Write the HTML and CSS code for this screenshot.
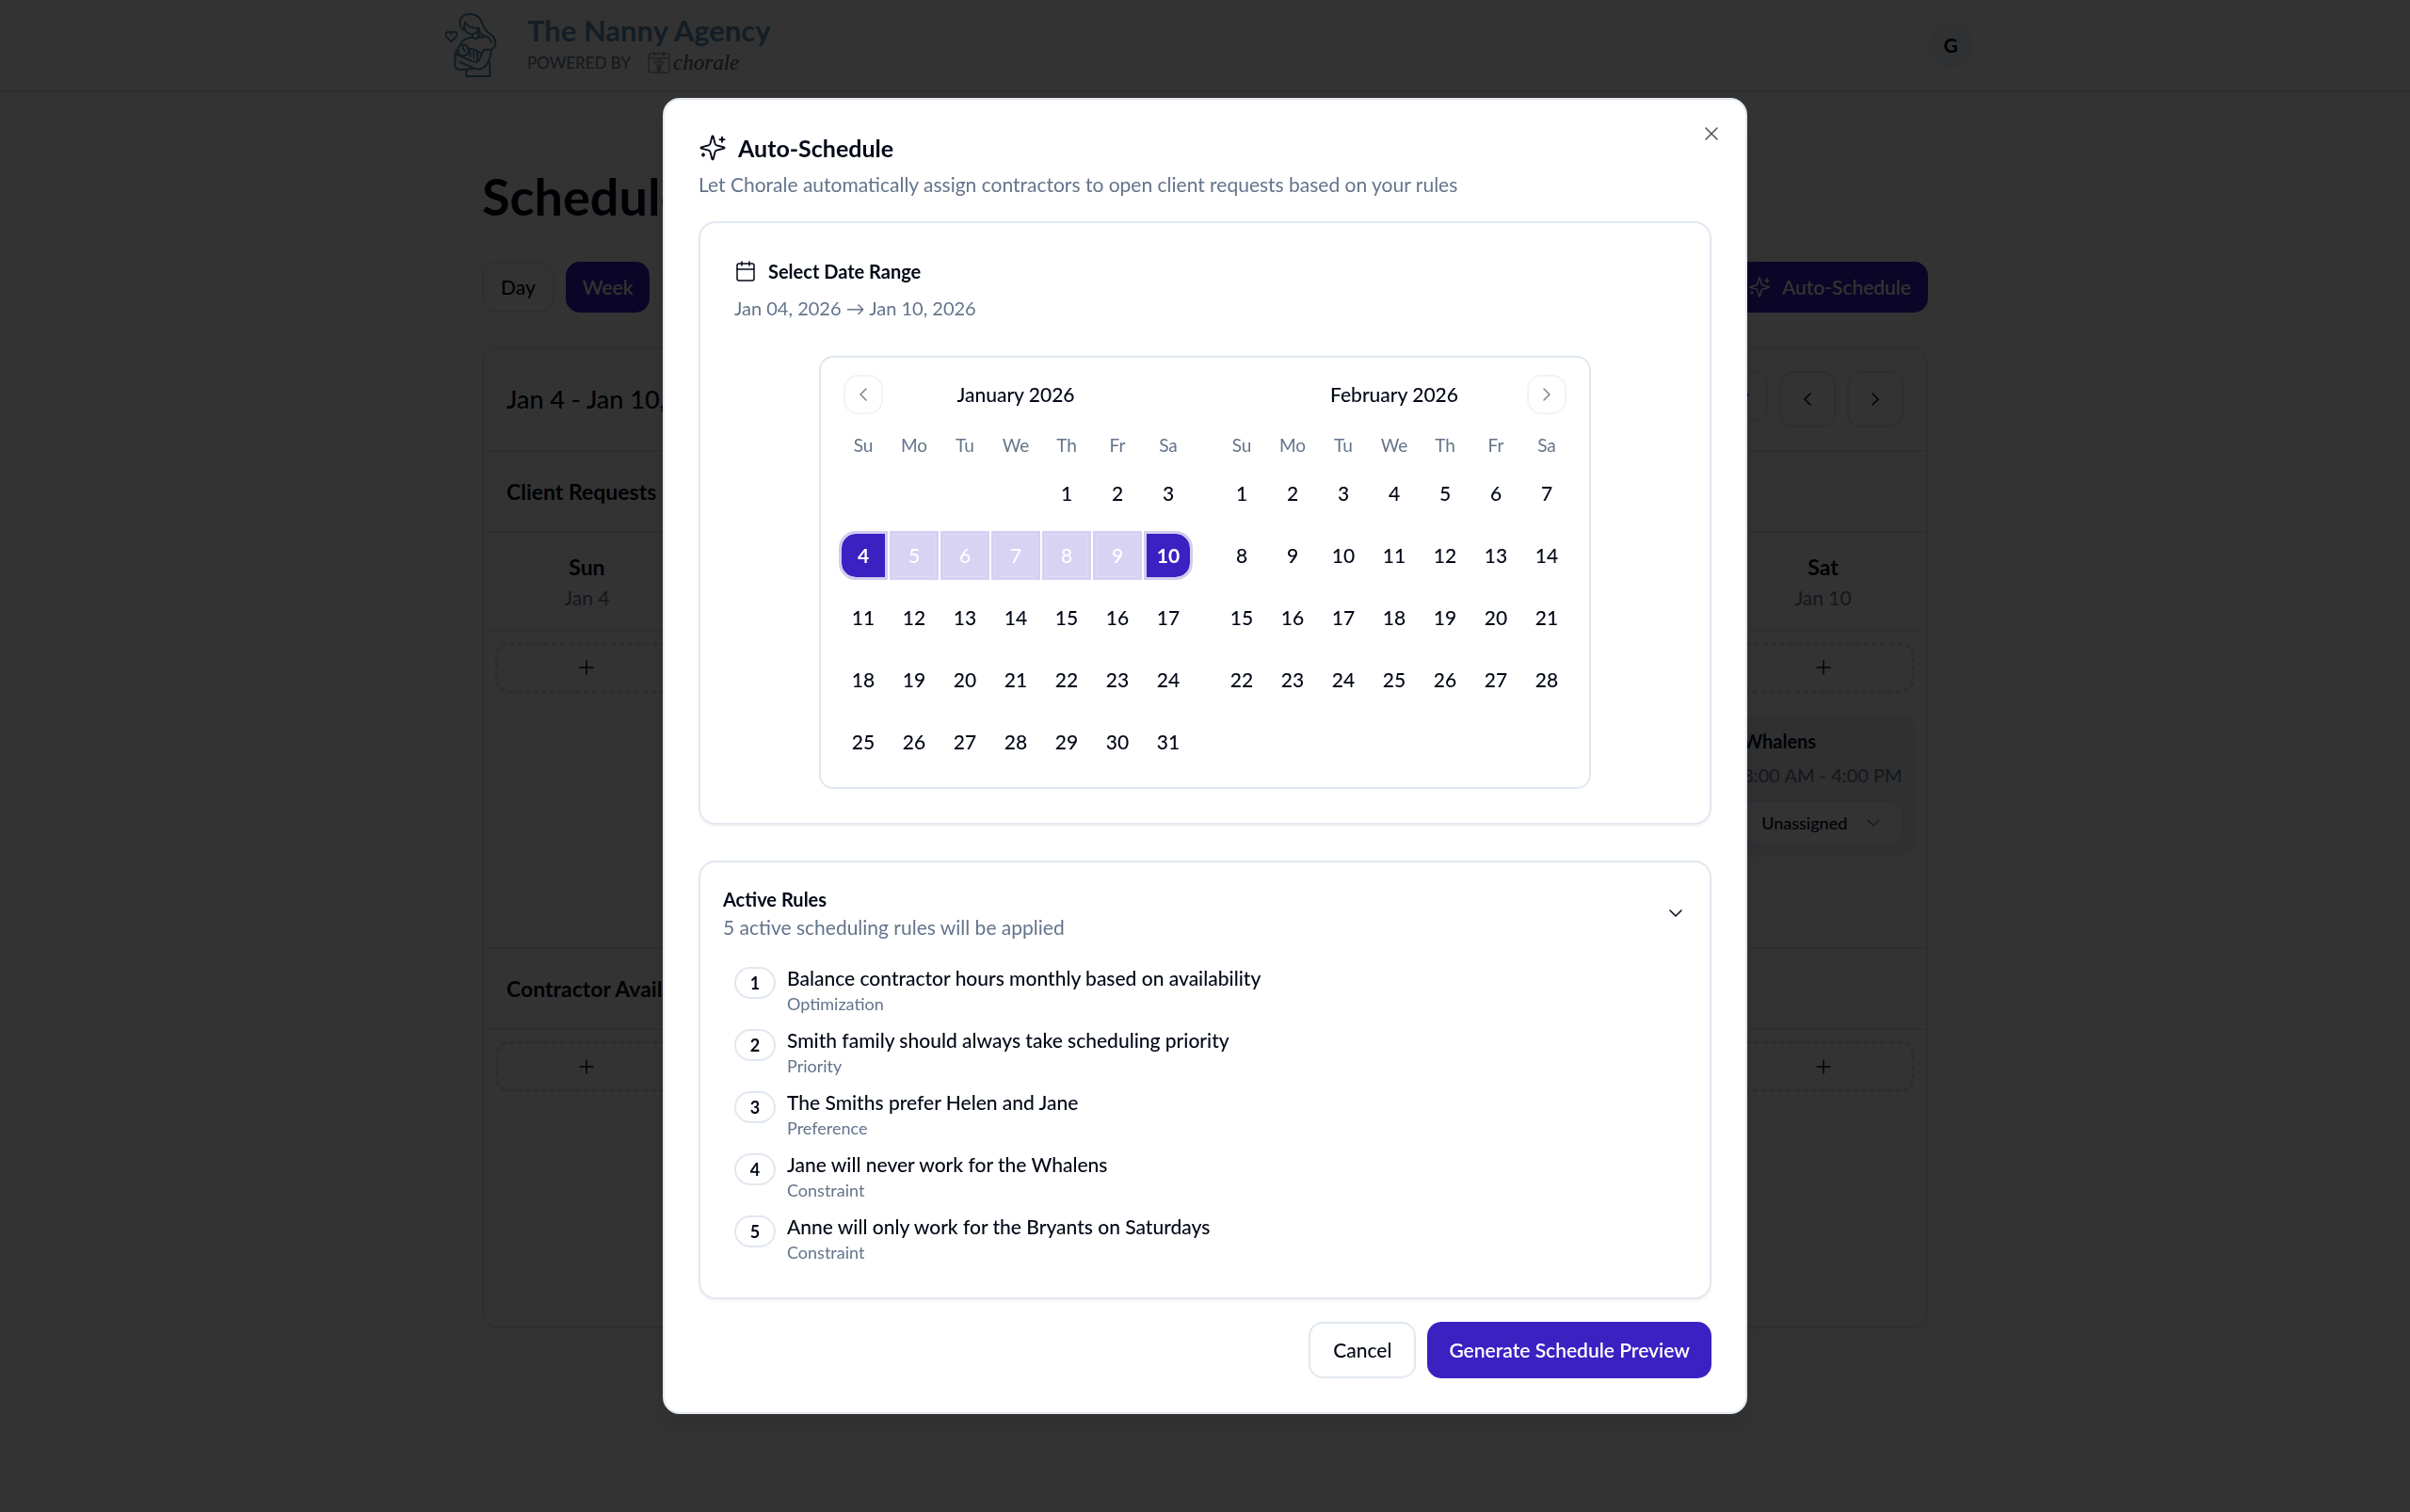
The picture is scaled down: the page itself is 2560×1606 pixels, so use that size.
FILE: index.html
```html
<!DOCTYPE html>
<html lang="en">
<head>
    <meta charset="UTF-8">
    <title>Schedule - The Nanny Agency</title>
    <link rel="stylesheet" href="styles.css">
</head>
<body>
    <!-- Icon set -->
    <svg class="sprite" aria-hidden="true">
        <symbol id="sparkles" viewBox="0 0 24 24">
            <path d="M9.937 15.5A2 2 0 0 0 8.5 14.063l-6.135-1.582a.5.5 0 0 1 0-.962L8.5 9.936A2 2 0 0 0 9.937 8.5l1.582-6.135a.5.5 0 0 1 .963 0L14.063 8.5A2 2 0 0 0 15.5 9.937l6.135 1.581a.5.5 0 0 1 0 .964L15.5 14.063a2 2 0 0 0-1.437 1.437l-1.582 6.135a.5.5 0 0 1-.963 0z"/>
            <path d="M20 3v4M22 5h-4M4 17v2M5 18H3"/>
        </symbol>
        <symbol id="calendar" viewBox="0 0 24 24">
            <path d="M8 2v4M16 2v4M3 10h18"/>
            <rect x="3" y="4" width="18" height="18" rx="2"/>
        </symbol>
        <symbol id="left" viewBox="0 0 24 24"><path d="m15 18-6-6 6-6"/></symbol>
        <symbol id="right" viewBox="0 0 24 24"><path d="m9 18 6-6-6-6"/></symbol>
        <symbol id="down" viewBox="0 0 24 24"><path d="m6 9 6 6 6-6"/></symbol>
        <symbol id="plus" viewBox="0 0 24 24"><path d="M5 12h14M12 5v14"/></symbol>
        <symbol id="close" viewBox="0 0 24 24"><path d="M18 6 6 18M6 6l12 12"/></symbol>
    </svg>

    <header class="topbar">
        <div class="topbar-inner">
            <svg class="logo" viewBox="90 36 180 216" aria-hidden="true">
                <path d="M118 132 103 118C97 110 102 101 110 101c5 0 8 4 8 8 0-4 4-8 9-8 9 0 13 9 7 17z"/>
                <path d="M160 97c-13-8-17-22-13-34 5-13 19-19 34-18 19 1 30 12 36 29 5 17 14 26 26 35 14 10 19 24 14 38-2 5-7 8-12 12"/>
                <path d="M163 71c-5 10-4 22 2 29 7 9 21 11 31 5 6-3 9-9 10-16-20 2-35-4-43-18z"/>
                <path d="M206 90c0 14 8 22 22 26 10 3 17 8 18 22"/>
                <path d="M186 109v6c-3 4-8 6-14 7-14 2-22 10-25 22M204 103v10c4 5 10 7 18 8M183 116c6 9 20 9 25 0"/>
                <path d="M143 147c8-6 18-6 25 0 8 8 8 20 0 26-6 5-14 6-21 4-9-6-11-20-4-30zM156 146c-2 10 2 16 8 17"/>
                <path d="M168 157c16-3 30 1 44 13M178 160v22M190 161v26M201 166v25"/>
                <path d="M135 158c-6 12-6 22-4 34l-2 12c0 12 8 18 20 18l46-3M133 172l48 22c10 4 20 4 26-2l14-34h24"/>
                <path d="M245 158c-1 20-5 38-17 52-10 10-24 12-36 8l-50-22M166 220v23h76l-2-46"/>
            </svg>
            <div class="brand">
                <span class="brand-name">The Nanny Agency</span>
                <span class="powered">
                    POWERED BY
                    <svg class="chorale-icon" viewBox="0 0 24 24" aria-hidden="true">
                        <rect x="1" y="3" width="22" height="20" rx="2"/>
                        <path d="M1 8h22M7 1v5M17 1v5"/>
                        <path d="M12 22v-8M12 18l-4-5M12 18l4-5M11 22l-1-5M13 22l1-5M6 13l2-2 2 2M14 13l2-2 2 2M10 11l2-2 2 2-2 2z"/>
                    </svg>
                    <em class="chorale">chorale</em>
                </span>
            </div>
            <button class="avatar">G</button>
        </div>
    </header>

    <main class="page">
        <h1>Schedule</h1>
        <div class="toolbar">
            <button class="btn">Day</button>
            <button class="btn primary">Week</button>
            <button class="btn">Month</button>
            <button class="btn primary auto"><svg class="icon"><use href="#sparkles"/></svg>Auto-Schedule</button>
        </div>

        <section class="board">
            <div class="board-head">
                <h2>Jan 4 - Jan 10, 2026</h2>
                <button class="btn">Today</button>
                <button class="btn square" aria-label="Previous week"><svg class="icon"><use href="#left"/></svg></button>
                <button class="btn square" aria-label="Next week"><svg class="icon"><use href="#right"/></svg></button>
            </div>
            <h3 class="section-title">Client Requests</h3>
            <div class="week day-names">
                <div><b>Sun</b><span>Jan 4</span></div>
                <div></div>
                <div></div>
                <div></div>
                <div></div>
                <div></div>
                <div><b>Sat</b><span>Jan 10</span></div>
            </div>
            <div class="week slots requests">
                <div><button class="add" aria-label="Add request"><svg class="icon"><use href="#plus"/></svg></button></div>
                <div></div>
                <div></div>
                <div></div>
                <div></div>
                <div></div>
                <div>
                    <button class="add" aria-label="Add request"><svg class="icon"><use href="#plus"/></svg></button>
                    <article class="request">
                        <b>Whalens</b>
                        <span>8:00 AM - 4:00 PM</span>
                        <div class="assign">
                            <select aria-label="Contractor"><option>Unassigned</option></select>
                            <svg class="icon"><use href="#down"/></svg>
                        </div>
                    </article>
                </div>
            </div>
            <h3 class="section-title">Contractor Availability</h3>
            <div class="week slots">
                <div><button class="add" aria-label="Add availability"><svg class="icon"><use href="#plus"/></svg></button></div>
                <div></div>
                <div></div>
                <div></div>
                <div></div>
                <div></div>
                <div><button class="add" aria-label="Add availability"><svg class="icon"><use href="#plus"/></svg></button></div>
            </div>
        </section>
    </main>

    <div class="modal-overlay">
        <div class="modal" role="dialog" aria-labelledby="modalTitle">
            <button class="close" aria-label="Close"><svg class="icon"><use href="#close"/></svg></button>
            <h2 class="modal-title" id="modalTitle"><svg class="icon large"><use href="#sparkles"/></svg>Auto-Schedule</h2>
            <p class="muted">Let Chorale automatically assign contractors to open client requests based on your rules</p>

            <section class="card">
                <h3 class="card-title"><svg class="icon"><use href="#calendar"/></svg>Select Date Range</h3>
                <p class="muted range">Jan 04, 2026 → Jan 10, 2026</p>
                <div class="picker">
                    <div class="month">
                        <div class="caption">
                            <button class="nav" aria-label="Previous month"><svg class="icon"><use href="#left"/></svg></button>
                            <span>January 2026</span>
                        </div>
                        <table id="january"></table>
                    </div>
                    <div class="month">
                        <div class="caption">
                            <span>February 2026</span>
                            <button class="nav" aria-label="Next month"><svg class="icon"><use href="#right"/></svg></button>
                        </div>
                        <table id="february"></table>
                    </div>
                </div>
            </section>

            <section class="card rules">
                <div class="rules-head">
                    <div>
                        <h3>Active Rules</h3>
                        <p class="muted">5 active scheduling rules will be applied</p>
                    </div>
                    <button class="toggle" aria-label="Collapse rules"><svg class="icon"><use href="#down"/></svg></button>
                </div>
                <ol class="rule-list">
                    <li><span class="badge">1</span><div><p>Balance contractor hours monthly based on availability</p><small>Optimization</small></div></li>
                    <li><span class="badge">2</span><div><p>Smith family should always take scheduling priority</p><small>Priority</small></div></li>
                    <li><span class="badge">3</span><div><p>The Smiths prefer Helen and Jane</p><small>Preference</small></div></li>
                    <li><span class="badge">4</span><div><p>Jane will never work for the Whalens</p><small>Constraint</small></div></li>
                    <li><span class="badge">5</span><div><p>Anne will only work for the Bryants on Saturdays</p><small>Constraint</small></div></li>
                </ol>
            </section>

            <div class="modal-buttons">
                <button class="btn big">Cancel</button>
                <button class="btn big primary">Generate Schedule Preview</button>
            </div>
        </div>
    </div>

    <script>
        const dayNames = ['Su', 'Mo', 'Tu', 'We', 'Th', 'Fr', 'Sa'];

        // Fill a table with the days of one month
        function renderMonth(id, year, month, from, to) {
            const table = document.getElementById(id);
            const first = new Date(year, month, 1).getDay();
            const count = new Date(year, month + 1, 0).getDate();
            let html = '<thead><tr>' + dayNames.map(d => `<th scope="col">${d}</th>`).join('') + '</tr></thead><tbody>';

            for (let start = 1 - first; start <= count; start += 7) {
                html += '<tr>';
                for (let day = start; day < start + 7; day++) {
                    let state = '';
                    if (day === from) state = 'start';
                    else if (day === to) state = 'end';
                    else if (day > from && day < to) state = 'middle';
                    html += day < 1 || day > count ? '<td></td>' : `<td><button class="day ${state}">${day}</button></td>`;
                }
                html += '</tr>';
            }
            table.innerHTML = html + '</tbody>';
        }

        renderMonth('january', 2026, 0, 4, 10);
        renderMonth('february', 2026, 1);
    </script>
</body>
</html>
```

FILE: styles.css
```css
* {
    box-sizing: border-box;
}

body {
    margin: 0;
    font-family: Lato, "Noto Sans", sans-serif;
    font-size: 21px;
    line-height: 30px;
    color: #020817;
    background-color: #fff;
}

h1, h2, h3, p, ol {
    margin: 0;
    padding: 0;
}

button, select {
    font: inherit;
    color: inherit;
    background: none;
    border: none;
    padding: 0;
    cursor: pointer;
}

.sprite {
    display: none;
}

.icon {
    width: 24px;
    height: 24px;
    flex: none;
    fill: none;
    stroke: currentColor;
    stroke-width: 1.5;
    stroke-linecap: round;
    stroke-linejoin: round;
}

.icon.large {
    width: 30px;
    height: 30px;
}

.muted {
    color: #64748b;
}

/* Top bar */

.topbar {
    border-bottom: 2px solid #e2e8f0;
}

.topbar-inner {
    display: flex;
    align-items: center;
    max-width: 1632px;
    height: 96px;
    margin: 0 auto;
}

.logo {
    width: 60px;
    height: 72px;
    margin: 0 30px 0 6px;
    fill: none;
    stroke: #5288ab;
    stroke-width: 6;
    stroke-linejoin: round;
}

.brand {
    display: flex;
    flex-direction: column;
    flex: 1;
}

.brand-name {
    font-size: 31px;
    font-weight: 700;
    line-height: 36px;
    color: #5f93b8;
}

.powered {
    display: flex;
    align-items: center;
    font-size: 17px;
    line-height: 33px;
    color: #64748b;
}

.chorale-icon {
    width: 24px;
    height: 24px;
    margin: 0 3px 0 18px;
    fill: none;
    stroke: #64748b;
    stroke-width: 1;
}

.chorale {
    font-family: "Liberation Serif", serif;
    font-size: 23px;
    color: #555;
}

.avatar {
    width: 48px;
    height: 48px;
    border-radius: 50%;
    font-weight: 700;
    background-color: #f1f5f9;
}

/* Schedule page */

.page {
    max-width: 1536px;
    margin: 0 auto;
    padding: 78px 0 48px;
}

h1 {
    font-size: 54px;
    line-height: 66px;
}

.toolbar {
    display: flex;
    gap: 12px;
    margin: 36px 0;
}

.btn {
    display: flex;
    align-items: center;
    justify-content: center;
    height: 54px;
    padding: 0 18px;
    border: 2px solid #e2e8f0;
    border-radius: 15px;
    font-weight: 500;
    background-color: #fff;
}

.btn.primary {
    padding: 0 16px;
    color: #fff;
    background-color: #3b21c2;
    border-color: #3b21c2;
}

.btn.auto {
    gap: 12px;
    margin-left: auto;
}

.btn.square {
    width: 60px;
    height: 60px;
    padding: 0;
}

.btn.big {
    height: 60px;
    padding: 0 24px;
}

.btn.big.primary {
    padding: 0 21px;
    font-weight: 600;
}

.board {
    border: 2px solid #e2e8f0;
    border-radius: 18px;
}

.board-head {
    display: flex;
    gap: 12px;
    padding: 24px;
}

.board-head h2 {
    flex: 1;
    align-self: center;
    font-size: 27px;
    font-weight: 500;
}

.section-title {
    padding: 24px;
    border-top: 2px solid #e2e8f0;
    border-bottom: 2px solid #e2e8f0;
    font-size: 23px;
    line-height: 36px;
}

.week {
    display: grid;
    grid-template-columns: repeat(7, minmax(0, 1fr));
}

.day-names {
    padding: 18px 0;
    border-bottom: 2px solid #e2e8f0;
    text-align: center;
}

.day-names b {
    display: block;
    font-size: 23px;
    line-height: 36px;
}

.day-names span {
    color: #64748b;
}

.slots > div {
    min-height: 315px;
    padding: 12px;
}

.requests > div {
    min-height: 336px;
}

.add {
    display: flex;
    align-items: center;
    justify-content: center;
    width: 100%;
    height: 54px;
    border: 3px dashed #d8dee7;
    border-radius: 15px;
}

.request {
    display: flex;
    flex-direction: column;
    margin-top: 24px;
    padding: 12px;
    border-radius: 15px;
    font-size: 20px;
    background-color: #eef0f2;
}

.request > b {
    margin-bottom: 6px;
}

.request > span {
    margin-bottom: 12px;
    color: #64748b;
    white-space: nowrap;
}

.assign {
    display: flex;
    align-items: center;
    height: 48px;
    padding: 0 18px;
    border: 2px solid #e2e8f0;
    border-radius: 15px;
    font-size: 18px;
    font-weight: 500;
    background-color: #fff;
}

.assign select {
    flex: 1;
    min-width: 0;
    appearance: none;
}

.assign .icon {
    opacity: 0.5;
}

/* Auto-schedule modal */

.modal-overlay {
    position: fixed;
    inset: 0;
    display: flex;
    justify-content: center;
    align-items: center;
    background-color: rgba(0, 0, 0, 0.8);
}

.modal {
    position: relative;
    width: 100%;
    max-width: 1152px;
    padding: 36px;
    border: 2px solid #e2e8f0;
    border-radius: 18px;
    background-color: #fff;
    box-shadow: 0 15px 24px rgba(0, 0, 0, 0.1);
}

.close {
    position: absolute;
    top: 24px;
    right: 24px;
    height: 24px;
    opacity: 0.7;
}

.close .icon {
    display: block;
}

.modal-title, .card-title {
    display: flex;
    align-items: center;
    gap: 12px;
    margin-bottom: 9px;
}

.modal-title {
    font-size: 25px;
}

.card {
    margin-top: 24px;
    padding: 36px;
    border: 2px solid #e2e8f0;
    border-radius: 18px;
    box-shadow: 0 2px 3px rgba(0, 0, 0, 0.05);
}

.card h3, .range {
    font-size: 20px;
}

.picker {
    display: flex;
    gap: 24px;
    width: fit-content;
    margin: 36px auto 0;
    padding: 18px 18px 21px;
    border: 2px solid #e2e8f0;
    border-radius: 15px;
    font-weight: 500;
}

.caption {
    display: grid;
    grid-template-columns: 42px 1fr 42px;
    align-items: center;
    height: 42px;
    margin-bottom: 18px;
    padding: 0 6px;
    text-align: center;
}

.caption span {
    grid-column: 2;
}

.nav {
    display: flex;
    align-items: center;
    justify-content: center;
    height: 42px;
    border: 2px solid #e2e8f0;
    border-radius: 15px;
    opacity: 0.5;
}

.month table, .month thead, .month tbody {
    display: block;
}

.month tr {
    display: flex;
}

.month tbody tr {
    margin-top: 12px;
}

.month tbody tr:first-child {
    margin-top: 9px;
}

.month th, .month td {
    width: 54px;
    padding: 0;
}

.month th {
    font-size: 19px;
    font-weight: 400;
    color: #64748b;
}

.month td {
    height: 54px;
    padding: 1px;
}

.day {
    width: 100%;
    height: 100%;
}

.day.middle {
    color: #fff;
    background-color: #d8d2f3;
    border: 3px solid #d6d0f2;
    box-shadow: inset 0 0 0 1px #ded9f5;
}

.day.start, .day.end {
    color: #fff;
    font-weight: 700;
    background-color: #3b21c2;
    background-clip: padding-box;
    border: 3px solid #d3ccf0;
}

.day.start {
    border-radius: 18px 0 0 18px;
}

.day.end {
    border-radius: 0 18px 18px 0;
}

.card.rules {
    margin-top: 38px;
    padding: 24px;
}

.rules-head {
    display: flex;
    align-items: center;
    justify-content: space-between;
}

.toggle {
    height: 24px;
}

.toggle .icon {
    display: block;
}

.rule-list {
    display: flex;
    flex-direction: column;
    gap: 12px;
    padding: 24px 12px 12px;
    list-style: none;
}

.rule-list li {
    display: flex;
    align-items: flex-start;
    gap: 12px;
}

.rule-list p {
    font-weight: 500;
}

.rule-list small {
    display: block;
    font-size: 18px;
    line-height: 24px;
    color: #64748b;
}

.badge {
    width: 44px;
    margin-top: 3px;
    border: 2px solid #e2e8f0;
    border-radius: 17px;
    font-size: 18px;
    font-weight: 700;
    text-align: center;
}

.modal-buttons {
    display: flex;
    justify-content: flex-end;
    gap: 12px;
    margin-top: 24px;
}
```
